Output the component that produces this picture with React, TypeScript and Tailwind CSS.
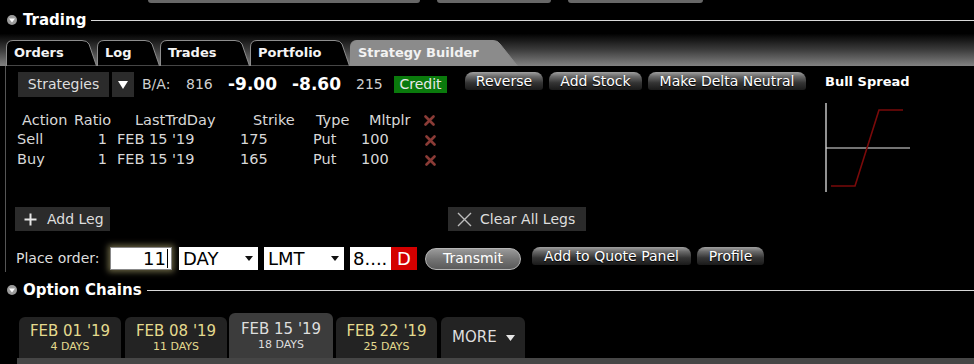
import React from "react";

const F = "font-['DejaVu_Sans',Verdana,sans-serif]";

function Tab({ label, w, slant, active, cls }: { label: string; w: number; slant: number; active?: boolean; cls: string }) {
  const h = 26;
  const d = `M0.5,${h} V7 Q0.5,0.5 7,0.5 H${w - slant - 5} Q${w - slant},0.5 ${w - slant + 2},4 L${w - 0.5},${h}`;
  return (
    <div className={`relative h-[26px] shrink-0 ${cls}`}>
      <svg className="absolute inset-0" width={w} height={h}>
        <path d={d + " Z"} fill={active ? "#8b8b8b" : "#000"} stroke={active ? "#8b8b8b" : "#8d8d8d"} strokeWidth={1} />
      </svg>
      <div className={`relative flex h-full items-center pl-[8px] text-[13px] font-bold ${active ? "text-[#f2f2f2]" : "text-[#f4f4f4]"}`}>{label}</div>
    </div>
  );
}

function Gloss({ children, cls }: { children: React.ReactNode; cls: string }) {
  return (
    <div
      className={`flex h-[18px] shrink-0 items-center justify-center rounded-t-[8px] rounded-b-[3px] bg-[linear-gradient(to_bottom,#a0a0a0_0%,#6a6a6a_25%,#343434_60%,#1a1a1a_100%)] text-[14px] text-white [text-shadow:0_1px_1px_#000] ${cls}`}
    >
      {children}
    </div>
  );
}

function RedX() {
  return (
    <svg width="11" height="11" viewBox="0 0 11 11">
      <path d="M1.5,1.5 L9.5,9.5 M9.5,1.5 L1.5,9.5" stroke="#8a3b36" strokeWidth="2.6" strokeLinecap="round" />
    </svg>
  );
}

function CircleIcon() {
  return (
    <div className="flex h-[10px] w-[10px] items-center justify-center rounded-full bg-[#9c9c9c]">
      <svg width="6" height="5" viewBox="0 0 6 5">
        <polygon points="0,0.5 6,0.5 3,4.5" fill="#fff" />
      </svg>
    </div>
  );
}

function DropArrow() {
  return (
    <svg width="8" height="5" viewBox="0 0 8 5">
      <polygon points="0,0 8,0 4,5" fill="#111" />
    </svg>
  );
}

function ExpTab({ date, days, active, cls }: { date: string; days: string; active?: boolean; cls: string }) {
  return (
    <div
      className={`flex shrink-0 flex-col items-center justify-center rounded-t-[6px] ${active ? "h-[45px] bg-[#3c3c3c] text-[#dedede]" : "h-[41px] bg-[#232323] text-[#e4da8e]"} ${cls}`}
    >
      <div className="text-[15px] leading-[17px]">{date}</div>
      <div className="text-[11px] leading-[13px]">{days}</div>
    </div>
  );
}

export default function App() {
  return (
    <div className={`h-[364px] w-[974px] overflow-hidden bg-black ${F}`}>
      {/* top strip */}
      <div className="flex h-[3px]">
        <div className="ml-[148px] h-[3px] w-[272px] rounded-b-[4px] bg-[#676767]" />
        <div className="ml-[17px] h-[3px] w-[114px] rounded-b-[4px] bg-[#676767]" />
        <div className="ml-[17px] h-[3px] w-[135px] rounded-b-[4px] bg-[#676767]" />
      </div>

      {/* Trading header */}
      <div className="mt-[8px] flex h-[18px] items-center">
        <div className="ml-[7px]">
          <CircleIcon />
        </div>
        <div className="ml-[6px] text-[15px] font-bold leading-[18px] text-white">Trading</div>
        <div className="ml-[5px] h-px flex-1 bg-[#d8d8d8]" />
      </div>

      {/* tab bar */}
      <div className="flex h-[37px] items-end bg-[linear-gradient(to_bottom,#000_0%,#000_12%,#3a3a3a_55%,#828282_100%)] pl-[6px]">
        <Tab label="Orders" w={91} slant={10} cls="w-[91px]" />
        <Tab label="Log" w={63} slant={10} cls="w-[63px]" />
        <Tab label="Trades" w={90} slant={10} cls="w-[90px]" />
        <Tab label="Portfolio" w={100} slant={10} cls="w-[100px]" />
        <Tab label="Strategy Builder" w={168} slant={20} active cls="w-[168px]" />
      </div>

      {/* panel */}
      <div className="ml-[5px] flex h-[206px] border-l border-[#555]">
        <div className="w-[819px] shrink-0 pt-[6px]">
          {/* row 1 */}
          <div className="flex h-[25px] items-center text-[14px] text-[#d0d0d0]">
            <div className="ml-[12px] flex h-[25px] w-[91px] items-center justify-center bg-[#2b2b2b] text-[14px] text-[#dedede]">Strategies</div>
            <div className="ml-[3px] flex h-[25px] w-[22px] items-center justify-center bg-[#2b2b2b]">
              <svg width="10" height="8" viewBox="0 0 10 8">
                <polygon points="0,0 10,0 5,8" fill="#fff" />
              </svg>
            </div>
            <div className="ml-[8px] w-[44px]">B/A:</div>
            <div className="w-[42px]">816</div>
            <div className="w-[64px] text-[17px] font-bold text-white">-9.00</div>
            <div className="w-[64px] text-[17px] font-bold text-white">-8.60</div>
            <div className="w-[38px]">215</div>
            <div className="flex h-[17px] w-[53px] items-center justify-center bg-[#0a7a0c] text-[14px] text-[#e8e8e8]">Credit</div>
            <Gloss cls="ml-[18px] w-[78px] self-start">Reverse</Gloss>
            <Gloss cls="ml-[6px] w-[93px] self-start">Add Stock</Gloss>
            <Gloss cls="ml-[6px] w-[158px] self-start">Make Delta Neutral</Gloss>
          </div>

          {/* table */}
          <div className="mt-[14px] text-[14.5px] text-[#d8d8d8]">
            <div className="flex h-[19px] items-center">
              <div className="ml-[16px] w-[52px]">Action</div>
              <div className="w-[61px]">Ratio</div>
              <div className="w-[118px]">LastTrdDay</div>
              <div className="w-[63px]">Strike</div>
              <div className="w-[53px]">Type</div>
              <div className="w-[55px]">Mltplr</div>
              <RedX />
            </div>
            {[
              ["Sell", "175"],
              ["Buy", "165"],
            ].map(([a, s]) => (
              <div key={a} className="flex h-[20px] items-center">
                <div className="ml-[11px] w-[60px]">{a}</div>
                <div className="w-[30px] text-right">1</div>
                <div className="ml-[10px] w-[123px]">FEB 15 '19</div>
                <div className="w-[73px]">{s}</div>
                <div className="w-[48px]">Put</div>
                <div className="w-[64px]">100</div>
                <RedX />
              </div>
            ))}
          </div>

          {/* add leg row */}
          <div className="mt-[37px] flex h-[24px] items-center text-[14px] text-[#dedede]">
            <div className="ml-[9px] flex h-[24px] w-[95px] items-center bg-[#2b2b2b]">
              <svg className="ml-[9px]" width="13" height="13" viewBox="0 0 13 13">
                <path d="M6.5,0.5 V12.5 M0.5,6.5 H12.5" stroke="#e6e6e6" strokeWidth="2" />
              </svg>
              <span className="ml-[10px]">Add Leg</span>
            </div>
            <div className="ml-[338px] flex h-[24px] w-[138px] items-center bg-[#2b2b2b]">
              <svg className="ml-[9px]" width="15" height="15" viewBox="0 0 15 15">
                <path d="M1,1 L14,14 M14,1 L1,14" stroke="#bdbdbd" strokeWidth="1.4" />
              </svg>
              <span className="ml-[8px]">Clear All Legs</span>
            </div>
          </div>

          {/* place order row */}
          <div className="mt-[16px] flex h-[23px] items-center">
            <div className="ml-[10px] w-[94px] text-[14px] text-[#dedede]">Place order:</div>
            <div className="flex h-[23px] w-[62px] items-center justify-end border border-[#888] bg-white pr-[3px] text-[18px] text-black shadow-[0_0_6px_2px_rgba(190,180,120,0.55)]">
              <span>11</span>
              <span className="ml-[1px] h-[19px] w-px bg-black" />
            </div>
            <div className="ml-[7px] flex h-[23px] w-[79px] items-center justify-between bg-white pl-[4px] pr-[5px] text-[18px] text-black">
              <span>DAY</span>
              <DropArrow />
            </div>
            <div className="ml-[6px] flex h-[23px] w-[80px] items-center justify-between bg-white pl-[4px] pr-[5px] text-[18px] text-black">
              <span>LMT</span>
              <DropArrow />
            </div>
            <div className="ml-[6px] flex h-[23px] w-[41px] items-center bg-white pl-[3px] text-[18px] text-black">8....</div>
            <div className="flex h-[23px] w-[26px] items-center justify-center bg-[#d40000] text-[18px] text-white">D</div>
            <div className="ml-[8px] flex h-[22px] w-[96px] items-center justify-center rounded-full border border-[#b5b5b5] bg-[linear-gradient(to_bottom,#9a9a9a_0%,#747474_50%,#5a5a5a_100%)] text-[14px] text-white shadow-[0_1px_2px_#000]">
              Transmit
            </div>
            <Gloss cls="ml-[11px] w-[159px] self-start">Add to Quote Panel</Gloss>
            <Gloss cls="ml-[6px] w-[67px] self-start">Profile</Gloss>
          </div>
        </div>

        {/* right column */}
        <div className="pt-[8px]">
          <div className="text-[13px] font-bold leading-[15px] text-white">Bull Spread</div>
          <svg className="mt-[14px]" width="90" height="90" viewBox="0 0 90 90">
            <line x1="1" y1="0" x2="1" y2="89" stroke="#e0e0e0" strokeWidth="1.3" />
            <line x1="1" y1="45" x2="85" y2="45" stroke="#e6e6e6" strokeWidth="1.2" />
            <polyline points="6,83 30,83 54,7 78,7" fill="none" stroke="#7a0a0a" strokeWidth="1.6" />
          </svg>
        </div>
      </div>

      {/* Option Chains header */}
      <div className="mt-[9px] flex h-[18px] items-center">
        <div className="ml-[7px]">
          <CircleIcon />
        </div>
        <div className="ml-[6px] text-[15px] font-bold leading-[18px] text-white">Option Chains</div>
        <div className="ml-[5px] h-px flex-1 bg-[#d8d8d8]" />
      </div>

      {/* expiry tabs */}
      <div className="flex h-[59px] items-end pl-[19px]">
        <ExpTab date="FEB 01 '19" days="4 DAYS" cls="w-[102px]" />
        <ExpTab date="FEB 08 '19" days="11 DAYS" cls="ml-[4px] w-[102px]" />
        <ExpTab date="FEB 15 '19" days="18 DAYS" active cls="ml-[2px] w-[104px]" />
        <ExpTab date="FEB 22 '19" days="25 DAYS" cls="ml-[3px] w-[101px]" />
        <div className="ml-[4px] flex h-[41px] w-[84px] shrink-0 items-center rounded-t-[6px] bg-[#232323] pl-[11px] text-[15px] text-[#dedede]">
          MORE
          <svg className="ml-[9px]" width="9" height="6" viewBox="0 0 9 6">
            <polygon points="0,0 9,0 4.5,6" fill="#e6e6e6" />
          </svg>
        </div>
      </div>
      <div className="ml-[17px] h-[6px] bg-[#464646]" />
    </div>
  );
}
